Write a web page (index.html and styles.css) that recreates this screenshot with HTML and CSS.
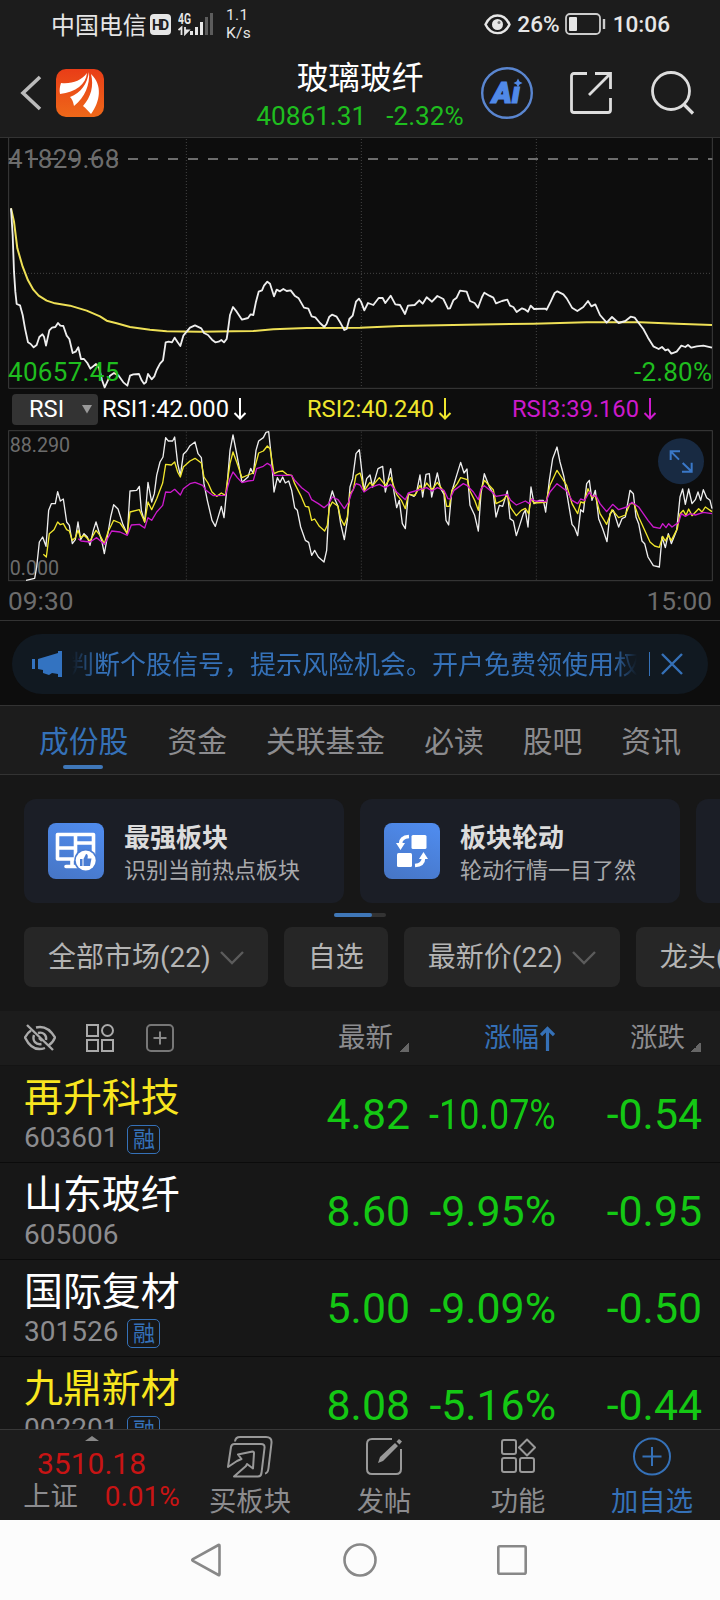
FILE: index.html
```html
<!DOCTYPE html>
<html lang="zh-CN">
    <head>
        <meta charset="UTF-8">
        <title>玻璃玻纤</title>
        <meta name="viewport" content="width=device-width, initial-scale=1.0">
        <link rel="stylesheet" href="styles.css">
    </head>
    <body>
        <div class="statusbar">
            <span class="carrier">中国电信</span>
            <svg class="hd" width="21" height="21" viewBox="0 0 21 21">
                <rect width="21" height="21" rx="4" fill="#e6e6e6"/>
                <text x="10.5" y="15.5" text-anchor="middle" font-size="14" font-weight="700" fill="#1c1c1c" textLength="17">HD</text>
            </svg>
            <svg class="signal" width="36" height="24" viewBox="0 0 36 24">
                <text x="0" y="11.5" font-size="14" font-weight="700" fill="#e6e6e6" textLength="13" lengthAdjust="spacingAndGlyphs">4G</text>
                <path d="M0.500 18L3.500 15.500V23M7 15V22L10.500 18.500H7" fill="none" stroke="#e6e6e6" stroke-width="1.800"/>
                <path d="M13.500 19v4M18.500 15v8M23.500 10v13" stroke="#e6e6e6" stroke-width="3"/>
                <path d="M28.500 5v18M33.500 1v22" stroke="#5c5c5c" stroke-width="3"/>
            </svg>
            <span class="speed">1.1<br>K/s</span>
            <span class="spacer"></span>
            <svg width="27" height="21" viewBox="0 0 27 21">
                <path d="M1.500 10.500C7-1.500 20-1.500 25.500 10.500C20 22 7 22 1.500 10.500Z" fill="none" stroke="#e6e6e6" stroke-width="2.400"/>
                <circle cx="13.500" cy="10.500" r="5.500" fill="#e6e6e6"/>
                <circle cx="15" cy="8.500" r="1.500" fill="#777"/>
            </svg>
            <span class="battery-text">26%</span>
            <svg class="battery" width="41" height="22" viewBox="0 0 41 22">
                <rect x="1" y="1" width="34" height="20" rx="4" fill="none" stroke="#ccc" stroke-width="1.800"/>
                <rect x="4" y="4" width="8" height="14" rx="1" fill="#e6e6e6"/>
                <path d="M39 6v10" stroke="#ccc" stroke-width="2.400"/>
            </svg>
            <span class="clock">10:06</span>
        </div>

        <header class="header">
            <div class="header-left">
                <svg width="22" height="36" viewBox="0 0 22 36">
                    <path d="M20 2L3 18L20 34" fill="none" stroke="#bbb" stroke-width="3.600"/>
                </svg>
                <svg class="logo" width="48" height="48" viewBox="0 0 48 48">
                    <defs>
                        <linearGradient id="logo-bg" x1="0" y1="0" x2="0" y2="1">
                            <stop offset="0" stop-color="#e93d17"/>
                            <stop offset="1" stop-color="#ee6819"/>
                        </linearGradient>
                    </defs>
                    <rect width="48" height="48" rx="10" fill="url(#logo-bg)"/>
                    <path d="M4 25C3 21 4 17 5 14C16 15 25 12 31 4C30 15 20 23 4 25Z" fill="#fff"/>
                    <path d="M33 3C34 16 29 28 18 37C17 31 15 29 14 28C25 24 31 15 33 3Z" fill="#fff"/>
                    <path d="M35 5C47 16 44 33 35 45C32 42 30 39 27 37C35 28 38 17 35 5Z" fill="#fff"/>
                </svg>
            </div>
            <div class="header-title">
                <h1>玻璃玻纤</h1>
                <p><span>40861.31</span><span>-2.32%</span></p>
            </div>
            <div class="header-right">
                <svg width="52" height="52" viewBox="0 0 52 52">
                    <circle cx="26" cy="26" r="24.800" fill="none" stroke="#5a86d0" stroke-width="2.400"/>
                    <text x="25" y="35.500" text-anchor="middle" font-size="30" font-weight="900" font-style="italic" fill="#5089e8" stroke="#5089e8" stroke-width="1.200">Aı</text>
                    <path d="M37 11.500l1.500 3 3 1.500-3 1.500-1.500 3-1.500-3-3-1.500 3-1.500Z" fill="#5089e8"/>
                </svg>
                <svg class="share" width="42" height="42" viewBox="0 0 42 42">
                    <path d="M17 1.500H4Q1.500 1.500 1.500 4V38Q1.500 40.500 4 40.500H38Q40.500 40.500 40.500 38V26M25 1.500H40.500V17M40 2L19 23" fill="none" stroke="#ddd" stroke-width="2.800"/>
                </svg>
                <svg class="search" width="44" height="44" viewBox="0 0 44 44">
                    <circle cx="20" cy="20" r="18.500" fill="none" stroke="#ddd" stroke-width="2.800"/>
                    <path d="M33 33.500L42 42.500" stroke="#ddd" stroke-width="3.200"/>
                </svg>
            </div>
        </header>

        <section class="charts">
            <!-- Intraday price, units are thirds of a pixel -->
            <svg class="chart" width="720" height="251" viewBox="0 9 2160 753">
                <g class="grid">
                    <path d="M559 12V758M1084 12V758M1609 12V758M30 415H2134"/>
                </g>
                <path class="frame" d="M26 8V760H2137V8"/>
                <path d="M26 72H2137" stroke="#8c8c8c" stroke-width="5" stroke-dasharray="30 30" stroke-dashoffset="2"/>
                <text class="muted" x="24" y="99" font-size="78" textLength="334">41829.68</text>
                <polyline class="line average" stroke-width="6" points="33,220 42,260 52,340 68,395 84,436 100,464 116,482 140,497 165,505 210,512 260,527 300,544 320,557 350,565 390,576 450,584 500,589 600,590 700,589 760,588 820,583 920,579 1080,578 1200,573 1400,569 1600,566 1760,562 1920,562 2030,566 2136,570"/>
                <polyline class="line white" stroke-width="5.500" points="33,220 38,300 42,410 46,470 50,507 60,511 68,540 75,580 84,622 92,627 101,637 110,630 118,606 127,598 132,605 138,632 148,586 156,578 166,576 174,564 181,572 190,573 200,602 208,612 218,654 227,650 235,637 243,672 252,672 262,684 271,701 288,687 297,698 306,735 314,757 322,740 330,722 342,714 356,722 370,742 382,752 390,722 400,718 417,717 425,736 432,746 438,742 444,717 455,733 463,724 470,705 480,686 489,676 497,622 506,620 516,622 524,608 533,622 541,633 550,602 560,590 570,578 585,571 604,580 612,594 624,600 636,614 646,622 656,620 664,615 672,622 680,612 684,585 690,540 699,516 710,530 726,554 744,549 752,538 760,540 768,500 776,470 786,466 792,452 802,440 810,446 822,484 830,464 840,469 850,462 860,468 872,466 884,482 896,490 912,518 925,521 935,544 946,547 960,564 973,576 980,566 988,545 996,539 1010,545 1022,565 1033,585 1040,582 1048,552 1058,542 1068,500 1077,491 1083,500 1093,526 1104,504 1120,510 1136,489 1148,489 1156,504 1172,482 1186,508 1200,510 1215,537 1224,512 1244,510 1258,496 1268,506 1280,487 1296,500 1312,483 1330,492 1344,521 1350,520 1360,496 1370,488 1380,467 1400,470 1410,498 1424,504 1434,518 1446,486 1453,473 1468,482 1480,488 1488,505 1506,498 1522,494 1530,512 1540,516 1550,531 1566,520 1576,524 1584,530 1592,512 1602,522 1636,521 1640,524 1652,500 1664,474 1672,469 1690,478 1700,490 1716,518 1732,528 1750,516 1764,498 1774,514 1786,508 1800,540 1820,563 1836,546 1856,564 1876,558 1892,545 1904,548 1916,564 1930,582 1944,608 1960,634 1976,642 1986,636 1996,646 2004,643 2014,656 2030,650 2044,632 2056,636 2064,630 2074,638 2090,634 2110,632 2136,638"/>
                <text class="down" x="24" y="738" font-size="78" textLength="334">40657.45</text>
                <text class="down" x="2136" y="738" font-size="78" text-anchor="end" textLength="234">-2.80%</text>
            </svg>

            <div class="rsi-bar">
                <button class="rsi-select">RSI
                    <svg width="12" height="9" viewBox="0 0 12 9"><path d="M1 0H11L6 8.500Z" fill="#999"/></svg>
                </button>
                <span class="rsi1">RSI1:42.000<svg class="arrow" width="14" height="24" viewBox="0 0 14 24"><path d="M7 1V21M1.500 16L7 21.500L12.500 16"/></svg></span>
                <span class="rsi2">RSI2:40.240<svg class="arrow" width="14" height="24" viewBox="0 0 14 24"><path d="M7 1V21M1.500 16L7 21.500L12.500 16"/></svg></span>
                <span class="rsi3">RSI3:39.160<svg class="arrow" width="14" height="24" viewBox="0 0 14 24"><path d="M7 1V21M1.500 16L7 21.500L12.500 16"/></svg></span>
            </div>

            <svg class="chart" width="720" height="152" viewBox="0 29 2160 456">
                <g class="grid">
                    <path d="M559 34V480M1084 34V480M1609 34V480"/>
                </g>
                <rect class="frame" x="26" y="31" width="2111" height="450"/>
                <text class="muted" x="29" y="96" font-size="59">88.290</text>
                <text class="muted" x="29" y="465" font-size="59">0.000</text>
                <polyline class="line white" stroke-width="4" points="78,480 104,474 110,440 118,365 128,350 138,378 146,270 154,250 166,250 173,214 181,242 190,236 200,305 208,315 217,370 226,358 234,305 242,358 252,340 262,350 270,375 280,330 288,305 297,335 306,365 313,400 322,350 332,290 341,253 354,266 368,310 382,342 390,212 410,210 418,198 424,270 434,305 444,186 455,245 463,220 470,165 480,125 489,110 497,52 505,62 518,62 524,50 533,130 541,165 550,102 560,92 570,76 585,65 594,100 604,112 612,190 622,240 636,300 646,318 656,285 664,258 672,292 680,210 690,90 699,44 710,100 726,186 744,170 752,144 760,160 768,90 776,62 790,52 798,36 806,34 814,110 822,215 832,172 840,186 848,170 856,188 866,182 875,210 884,262 892,270 902,320 916,360 926,366 935,405 944,390 955,410 972,425 980,390 988,245 997,212 1006,240 1014,258 1022,310 1033,358 1042,300 1050,200 1058,175 1068,100 1078,88 1084,140 1092,210 1100,175 1110,164 1118,200 1134,145 1148,138 1156,215 1172,145 1182,215 1190,262 1198,240 1207,310 1216,325 1225,220 1242,228 1250,215 1260,164 1268,230 1278,162 1288,160 1295,230 1312,158 1322,205 1332,222 1338,300 1346,314 1355,215 1370,165 1382,126 1392,158 1401,146 1410,255 1424,285 1435,332 1443,220 1453,160 1468,200 1480,220 1488,290 1498,255 1508,258 1522,212 1530,295 1540,302 1549,346 1558,318 1570,280 1576,270 1584,320 1593,200 1602,250 1618,240 1630,240 1637,275 1648,180 1658,115 1671,80 1680,125 1692,170 1704,240 1716,312 1724,322 1733,346 1742,268 1750,275 1760,190 1768,180 1776,240 1786,210 1796,295 1808,325 1821,364 1830,280 1840,270 1856,320 1866,295 1876,290 1890,210 1900,220 1908,290 1916,310 1926,362 1934,370 1944,410 1960,436 1978,440 1986,350 1996,382 2005,340 2014,370 2030,330 2040,230 2048,206 2056,252 2066,206 2076,250 2086,238 2094,215 2102,240 2110,208 2120,232 2130,240 2136,265"/>
                <polyline class="line yellow" stroke-width="4" points="130,402 139,410 148,340 162,328 173,305 181,313 190,310 200,328 208,332 217,360 226,352 234,330 242,352 252,345 270,362 288,330 300,345 313,370 324,335 341,300 360,308 382,340 390,275 418,268 434,305 444,245 455,268 470,235 488,188 497,132 514,134 524,125 533,155 541,170 550,140 570,122 585,114 604,128 612,170 624,188 636,215 650,228 664,218 676,225 690,130 699,95 710,125 726,172 744,164 760,158 776,98 790,92 802,77 810,85 822,160 835,154 848,152 860,162 875,165 884,190 902,225 916,258 926,260 935,300 944,296 958,318 974,332 982,315 988,262 997,245 1014,258 1022,295 1033,315 1042,290 1050,220 1060,208 1068,165 1080,158 1084,170 1092,212 1110,186 1118,196 1138,172 1156,195 1172,172 1190,222 1204,240 1216,265 1225,222 1245,225 1260,195 1268,212 1280,188 1296,208 1312,186 1332,215 1340,258 1348,258 1356,210 1372,190 1382,172 1402,178 1410,212 1424,240 1435,270 1443,210 1453,180 1480,208 1488,250 1508,240 1522,225 1532,262 1549,286 1564,270 1576,264 1586,280 1593,235 1602,248 1638,246 1650,195 1671,150 1684,170 1700,195 1716,250 1733,280 1742,245 1752,248 1764,205 1776,232 1786,225 1800,280 1820,312 1836,268 1856,292 1876,284 1890,250 1902,250 1916,290 1932,325 1950,365 1964,377 1978,381 1988,348 1996,362 2005,345 2014,360 2032,325 2040,280 2050,270 2058,285 2066,266 2076,286 2096,265 2106,275 2116,260 2136,274"/>
                <polyline class="line magenta" stroke-width="4" points="235,355 243,362 270,365 290,352 313,372 335,332 360,335 382,345 394,314 418,312 434,323 444,292 455,300 470,275 488,255 497,215 512,216 524,207 541,224 550,205 570,190 585,186 608,195 618,210 640,226 676,225 690,175 699,155 712,172 726,187 744,182 760,180 770,145 790,138 802,129 812,135 822,165 875,165 884,180 905,202 926,218 935,238 955,250 972,262 986,250 997,230 1014,238 1033,265 1046,245 1054,220 1068,190 1080,194 1092,215 1110,202 1138,192 1156,202 1172,192 1190,215 1216,238 1225,218 1280,202 1296,212 1312,202 1332,210 1344,235 1350,236 1362,210 1390,190 1402,196 1420,215 1435,238 1443,205 1453,196 1480,218 1488,228 1522,222 1532,240 1549,254 1576,242 1588,250 1595,236 1606,242 1638,244 1650,215 1671,190 1700,212 1716,240 1733,250 1742,236 1754,240 1768,215 1778,228 1788,226 1800,250 1820,274 1838,252 1856,268 1880,260 1896,246 1916,260 1944,300 1960,320 1980,324 1988,310 1998,322 2006,310 2016,320 2036,306 2044,280 2056,288 2070,280 2086,284 2110,276 2136,280"/>
                <!-- Fullscreen button -->
                <circle cx="2043" cy="123" r="69" fill="#182a42"/>
                <path d="M2012 119V93H2040M2013 94L2037 118M2075 127V154H2046M2074 153L2048 128" fill="none" stroke="#3a78c8" stroke-width="6"/>
            </svg>

            <div class="time-axis"><span>09:30</span><span>15:00</span></div>
        </section>

        <section class="notice-wrap">
            <div class="notice">
                <svg width="31" height="26" viewBox="0 0 31 26">
                    <path d="M0 8h3v10H0zM6 8L26 2V0h4v26h-4v-3l-6-1-3 2-6-2V19L6 18Z" fill="#3373c1"/>
                </svg>
                <div class="marquee"><span>判断个股信号，提示风险机会。开户免费领使用权</span></div>
                <i class="divider"></i>
                <svg class="close" width="22" height="22" viewBox="0 0 22 22">
                    <path d="M1 1L21 21M21 1L1 21" stroke="#3571b8" stroke-width="2.400"/>
                </svg>
            </div>
        </section>

        <nav class="tabs">
            <a class="active">成份股</a>
            <a>资金</a>
            <a>关联基金</a>
            <a>必读</a>
            <a>股吧</a>
            <a>资讯</a>
        </nav>

        <section class="cards">
            <div class="card">
                <svg width="56" height="56" viewBox="0 0 56 56">
                    <defs>
                        <linearGradient id="icon-bg" x1="0.700" y1="0" x2="0.300" y2="1">
                            <stop offset="0" stop-color="#4f8bed"/>
                            <stop offset="1" stop-color="#4777c8"/>
                        </linearGradient>
                    </defs>
                    <rect width="56" height="56" rx="8" fill="url(#icon-bg)"/>
                    <path d="M9.500 11.500H45.500V36H9.500ZM27.500 11.500V36M9.500 25H27.500M27.500 20H45.500M18 43.500H30M24 36V43" fill="none" stroke="#fff" stroke-width="3.600" stroke-linejoin="round" stroke-linecap="round"/>
                    <circle cx="37.700" cy="37.500" r="11.500" fill="#4a7dd3"/>
                    <circle cx="37.700" cy="37.500" r="10" fill="#fff"/>
                    <path d="M32 36h2.500v7H32zM35.500 36l2.500-5q2.500 0 1.500 4.500h4l-1.500 7.500h-6.500z" fill="#4a7dd3"/>
                </svg>
                <div><h2>最强板块</h2><p>识别当前热点板块</p></div>
            </div>
            <div class="card">
                <svg width="56" height="56" viewBox="0 0 56 56">
                    <rect width="56" height="56" rx="8" fill="url(#icon-bg)"/>
                    <rect x="27.500" y="12" width="15" height="14" rx="1.500" fill="#fff"/>
                    <rect x="13" y="30" width="15" height="14" rx="1.500" fill="#fff"/>
                    <path d="M25 13.500Q16.500 14 16.500 21M31 42.500Q39.500 42 39.500 35" fill="none" stroke="#fff" stroke-width="3.600"/>
                    <path d="M12 20H21L16.500 27ZM35 36H44L39.500 29Z" fill="#fff"/>
                </svg>
                <div><h2>板块轮动</h2><p>轮动行情一目了然</p></div>
            </div>
            <div class="card"></div>
        </section>
        <div class="pager"><i></i></div>

        <section class="chips">
            <span class="chip">全部市场(22)<svg width="24" height="14" viewBox="0 0 24 14"><path d="M1 1L12 12L23 1"/></svg></span>
            <span class="chip">自选</span>
            <span class="chip">最新价(22)<svg width="24" height="14" viewBox="0 0 24 14"><path d="M1 1L12 12L23 1"/></svg></span>
            <span class="chip">龙头(22)</span>
        </section>

        <section class="stocks">
            <div class="row head">
                <div class="tools">
                    <svg width="32" height="28" viewBox="0 0 32 28">
                        <g fill="none" stroke="#aaa" stroke-width="2.400">
                            <path d="M12 3.500C20 1.500 26 5 31 13.500C29.500 17 27 20 24.500 21.500M7 6.500C4.500 8 2.500 10.500 1 13.500C6 23.500 13 27 21 24"/>
                            <path d="M14 9C19 7.500 23 11 22 16M10 11C8 17 12 21 17.500 20"/>
                            <path d="M15 14L18 17"/>
                            <path d="M3 1L29 26"/>
                        </g>
                    </svg>
                    <svg width="28" height="28" viewBox="0 0 28 28">
                        <g fill="none" stroke="#aaa" stroke-width="2">
                            <rect x="1" y="1" width="11" height="11"/>
                            <circle cx="21.500" cy="6.500" r="5.500"/>
                            <rect x="1" y="16" width="11" height="11"/>
                            <rect x="16" y="16" width="11" height="11"/>
                        </g>
                    </svg>
                    <svg width="28" height="28" viewBox="0 0 28 28">
                        <rect x="1" y="1" width="26" height="26" rx="4" fill="none" stroke="#777" stroke-width="2"/>
                        <path d="M14 7.500V20.500M7.500 14H20.500" stroke="#888" stroke-width="2"/>
                    </svg>
                </div>
                <div class="num">最新<i class="corner"></i></div>
                <div class="num sorted">涨幅<svg width="15" height="25" viewBox="0 0 15 25"><path d="M7.500 25V3M1 9L7.500 2.500L14 9" fill="none" stroke="#3571b8" stroke-width="3.200"/></svg></div>
                <div class="num">涨跌<i class="corner"></i></div>
            </div>
            <div class="row">
                <div class="stock"><b class="held">再升科技</b><p>603601<em>融</em></p></div>
                <div class="num">4.82</div>
                <div class="num"><span class="squeeze">-10.07%</span></div>
                <div class="num">-0.54</div>
            </div>
            <div class="row">
                <div class="stock"><b>山东玻纤</b><p>605006</p></div>
                <div class="num">8.60</div>
                <div class="num">-9.95%</div>
                <div class="num">-0.95</div>
            </div>
            <div class="row">
                <div class="stock"><b>国际复材</b><p>301526<em>融</em></p></div>
                <div class="num">5.00</div>
                <div class="num">-9.09%</div>
                <div class="num">-0.50</div>
            </div>
            <div class="row">
                <div class="stock"><b class="held">九鼎新材</b><p>002201<em>融</em></p></div>
                <div class="num">8.08</div>
                <div class="num">-5.16%</div>
                <div class="num">-0.44</div>
            </div>
        </section>

        <footer class="toolbar">
            <div class="index">
                <svg width="14" height="5" viewBox="0 0 14 5"><path d="M0 5L7 0L14 5Z" fill="#888"/></svg>
                <strong>3510.18</strong>
                <p><span>上证</span><span class="up">0.01%</span></p>
            </div>
            <a>
                <svg width="46" height="42" viewBox="0 0 46 42">
                    <g fill="none" stroke="#999" stroke-width="2" stroke-linejoin="round">
                        <path d="M8 5.500Q8.500 1 13 1H39Q45 1 44.500 7L41.500 32Q41 37 38 37.500"/>
                        <path d="M1 31L4 11Q4.500 8 7.500 8H34Q38 8 37.500 12L34.500 37Q34 40.500 31 40.500H7L19 30L20 28L26 32.500L27 17Q27 15.500 25.500 15.500L11 18.500L14.500 23L10 25Z"/>
                    </g>
                </svg>
                买板块
            </a>
            <a>
                <svg width="38" height="42" viewBox="0 0 38 42">
                    <path d="M27 3H7Q2 3 2 8V33Q2 38 7 38H31Q36 38 36 33V13" fill="none" stroke="#999" stroke-width="2"/>
                    <path d="M13 27L15 21L30 7L33 10L18 25ZM31.500 5.500L34 3L37 5.500L34.500 8.500Z" fill="#999"/>
                </svg>
                发帖
            </a>
            <a>
                <svg width="36" height="42" viewBox="0 0 36 42">
                    <g fill="none" stroke="#999" stroke-width="2">
                        <rect x="2" y="4" width="14" height="14" rx="2"/>
                        <path d="M27 3.500L35 11.500L27 19.500L19 11.500Z" stroke-linejoin="round"/>
                        <rect x="2" y="22" width="14" height="14" rx="2"/>
                        <rect x="20" y="22" width="14" height="14" rx="2"/>
                    </g>
                </svg>
                功能
            </a>
            <a class="add">
                <svg width="38" height="42" viewBox="0 0 38 42">
                    <circle cx="19" cy="20.500" r="18" fill="none" stroke="#3571b8" stroke-width="2"/>
                    <path d="M19 11V30M9.500 20.500H28.500" stroke="#3571b8" stroke-width="2"/>
                </svg>
                加自选
            </a>
        </footer>

        <div class="navbar">
            <svg width="30" height="34" viewBox="0 0 30 34"><path d="M27.500 2Q28.500 1.500 28.500 3V31Q28.500 32.500 27.500 32L2 18Q0.500 17 2 16Z"/></svg>
            <svg width="34" height="34" viewBox="0 0 34 34"><circle cx="17" cy="17" r="15.500"/></svg>
            <svg width="30" height="30" viewBox="0 0 30 30"><rect x="1.300" y="1.300" width="27.400" height="27.400" rx="1.500"/></svg>
        </div>
    </body>
</html>
```

FILE: styles.css
```css
* { box-sizing: border-box; }

body {
    display: flex;
    flex-direction: column;
    width: 720px;
    height: 1600px;
    margin: 0;
    overflow: hidden;
    background-color: #171717;
    color: white;
    font-family: Roboto, "Noto Sans CJK SC", sans-serif;
}

h1, h2, p { margin: 0; font-weight: normal; }

svg { display: block; flex: none; }

/* Status bar */
.statusbar {
    display: flex;
    align-items: center;
    flex: none;
    height: 48px;
    padding: 0 50px 0 51px;
    background-color: #1c1c1c;
    color: #e6e6e6;
    font-size: 23px;
    line-height: 48px;
}

.carrier { width: 99px; padding-top: 3px; font-size: 23.9px; }

.signal { margin-left: 7px; }

.speed {
    margin-left: 12px;
    font-size: 15.5px;
    line-height: 18px;
    letter-spacing: 0.3px;
}

.spacer { flex: 1; }

.battery-text { margin-left: 6px; padding-top: 2px; font-weight: 500; font-size: 22.6px; }

.battery { margin-left: 5px; }

.clock { margin-left: 7px; padding-top: 2px; font-weight: 500; font-size: 22.6px; }

/* Header */
.header {
    display: grid;
    grid-template-columns: 240px 240px 240px;
    flex: none;
    height: 90px;
    border-bottom: 1px solid #333;
    background-color: #1c1c1c;
}

.header-left { display: flex; align-items: center; padding-left: 20px; }

.logo { margin-left: 14px; }

.header-title { text-align: center; }

.header-title h1 {
    height: 48px;
    font-size: 31.7px;
    line-height: 62px;
}

.header-title p {
    display: flex;
    justify-content: center;
    gap: 20px;
    font-size: 26.2px;
    line-height: 40px;
    color: #1fbd1f;
}

.header-right { display: flex; align-items: center; padding-left: 1px; }

.share { margin-left: 37px; }

.search { margin-left: 39px; }

/* Charts */
.charts {
    flex: none;
    height: 483px;
    background-color: #0d0d0d;
    border-bottom: 1px solid #333;
}

.grid { fill: none; stroke: #444; stroke-width: 3; stroke-dasharray: 3 6; }

.frame { fill: none; stroke: #3c3c3c; stroke-width: 3; }

.line { fill: none; stroke-linejoin: round; }

.white { stroke: #eee; }

.average { stroke: #eee056; }

.yellow { stroke: #f0e62d; }

.magenta { stroke: #cc1acc; }

.muted { fill: #6c6c6c; }

.down { fill: #1fbd1f; }

.rsi-bar {
    display: grid;
    grid-template-columns: 90px 205px 205px 1fr;
    align-items: center;
    height: 41px;
    padding-left: 12px;
    font-size: 23.7px;
    line-height: 38px;
}

.rsi-bar span { display: flex; align-items: center; gap: 4px; height: 38px; margin-top: -2px; }

.rsi-select {
    display: flex;
    align-items: center;
    justify-content: space-between;
    width: 86px;
    height: 31px;
    margin-top: -1px;
    padding: 0 5px 0 17px;
    border: 0;
    border-radius: 4px;
    background-color: #333;
    color: #fff;
    font: 23.7px Roboto, sans-serif;
}

.arrow { fill: none; stroke: currentColor; stroke-width: 2; }

.rsi1 { color: #fff; }

.rsi2 { color: #f0e62d; }

.rsi3 { color: #cc1acc; }

.time-axis {
    display: flex;
    justify-content: space-between;
    padding: 0 8px 0 8px;
    color: #6c6c6c;
    font-size: 26.3px;
    line-height: 38px;
}

/* Scrolling notice */
.notice-wrap {
    flex: none;
    height: 84px;
    padding: 13px 12px 0;
    background-color: #0d0d0d;
}

.notice {
    display: flex;
    align-items: center;
    height: 60px;
    padding: 0 25px 0 20px;
    border-radius: 30px;
    background-color: #111921;
    color: #3571b8;
}

.marquee {
    width: 567px;
    height: 60px;
    margin-left: 9px;
    overflow: hidden;
    white-space: nowrap;
    font-size: 26px;
    line-height: 62px;
    -webkit-mask-image: linear-gradient(to right, transparent, black 26px, black 540px, transparent);
    mask-image: linear-gradient(to right, transparent, black 26px, black 540px, transparent);
}

.marquee span { margin-left: -4px; }

.divider { width: 1px; height: 24px; margin-left: 12px; background-color: #3571b8; }

.close { margin-left: 11px; }

/* Tabs */
.tabs {
    display: flex;
    flex: none;
    gap: 39px;
    height: 70px;
    padding-left: 39px;
    border-top: 1px solid #333;
    border-bottom: 1px solid #333;
    background-color: #1c1c1c;
    color: #8c8c8f;
    font-size: 29.8px;
    line-height: 72px;
}

.tabs .active {
    display: flex;
    flex-direction: column;
    align-items: center;
    color: #3571b8;
}

.tabs .active::after {
    content: "";
    width: 40px;
    height: 4px;
    margin: -13px 1px 0 0;
    border-radius: 2px;
    background-color: #3f77b8;
}

/* Feature cards */
.cards {
    display: flex;
    flex: none;
    gap: 16px;
    padding: 24px 0 0 24px;
    overflow: hidden;
}

.card {
    display: flex;
    flex: none;
    gap: 20px;
    width: 320px;
    height: 104px;
    padding: 24px;
    border-radius: 12px;
    background-color: #1b1e26;
}

.card h2 {
    color: #dcdcdc;
    font-size: 26px;
    font-weight: 700;
    line-height: 30px;
}

.card p { color: #a8a9ac; font-size: 22px; line-height: 36px; white-space: nowrap; }

.pager {
    flex: none;
    width: 52px;
    height: 4px;
    margin: 10px 0 0 334px;
    border-radius: 2px;
    background-color: #333;
}

.pager i {
    display: block;
    width: 38px;
    height: 4px;
    border-radius: 2px;
    background-color: #3f77b8;
}

.chips {
    display: flex;
    flex: none;
    gap: 16px;
    margin-top: 10px;
    padding-left: 24px;
    overflow: hidden;
}

.chip {
    display: flex;
    flex: none;
    align-items: center;
    gap: 9px;
    height: 60px;
    padding: 1px 24px 0;
    border-radius: 8px;
    background-color: #262626;
    color: #b4b4b4;
    font-size: 28px;
    line-height: 66px;
    white-space: nowrap;
}

.chip path { fill: none; stroke: #5c5c5c; stroke-width: 2.4; }

/* Stock table */
.stocks {
    flex: none;
    height: 418px;
    margin-top: 24px;
    overflow: hidden;
}

.row {
    display: grid;
    grid-template-columns: 250px 160px 146px 146px;
    height: 97px;
    border-bottom: 1px solid #0b0b0b;
}

.row .num {
    justify-self: end;
    color: #14c814;
    font-size: 42.8px;
    line-height: 97px;
    white-space: nowrap;
}

.row.head {
    grid-template-rows: 54px;
    height: 55px;
    border-bottom: 1px solid #141414;
    background-color: #1c1c1c;
}

.row.head .num {
    display: flex;
    align-items: center;
    padding-right: 1px;
    color: #8c8c8f;
    font-size: 27.5px;
    line-height: 56px;
}

.row.head .sorted { gap: 1px; color: #3571b8; }

.corner {
    width: 10px;
    height: 10px;
    margin: 18px 0 0 6px;
    background: linear-gradient(135deg, transparent 50%, #666 50%);
}

.tools { display: flex; align-items: center; gap: 31px; padding-left: 24px; }

.tools svg + svg { margin-left: -1px; }

.tools svg + svg + svg { margin-left: 1px; }

.squeeze { display: inline-block; transform: scaleX(0.84); transform-origin: right; }

.stock { padding: 10px 0 0 24px; }

.stock b {
    display: block;
    height: 44px;
    font-size: 38.9px;
    font-weight: 400;
    line-height: 44px;
}

.stock .held { color: #f8e61f; }

.stock p {
    display: flex;
    gap: 9px;
    color: #8c8c8f;
    font-size: 28px;
    line-height: 36px;
}

.stock em {
    width: 33px;
    height: 29px;
    margin-top: 5px;
    border: 1px solid #3571b8;
    border-radius: 5px;
    color: #3571b8;
    font-size: 22px;
    font-style: normal;
    line-height: 27px;
    text-align: center;
}

/* Bottom toolbar */
.toolbar {
    display: grid;
    grid-template-columns: 183px repeat(4, 134px);
    flex: none;
    height: 91px;
    border-top: 1px solid #383838;
    background-color: #1c1c1c;
    color: #8c8c8f;
    font-size: 27.3px;
}

.toolbar a {
    display: flex;
    flex-direction: column;
    align-items: center;
    padding-top: 6px;
    line-height: 49px;
}

.toolbar .add { color: #3571b8; }

.index {
    display: flex;
    flex-direction: column;
    align-items: center;
    padding-top: 6px;
}

.index strong {
    font-size: 30px;
    font-weight: 400;
    line-height: 46px;
    color: #c81414;
}

.index p { display: flex; gap: 27px; padding-left: 20px; line-height: 20px; }

.index .up { color: #c81414; font-size: 28px; }

/* System navigation */
.navbar {
    display: flex;
    align-items: center;
    flex: 1;
    padding-left: 191px;
    gap: 122px;
    background-color: #fcfcfc;
}

.navbar svg { fill: none; stroke: #888; stroke-width: 2.6; }

.navbar svg:last-child { margin-left: -2px; }
```
